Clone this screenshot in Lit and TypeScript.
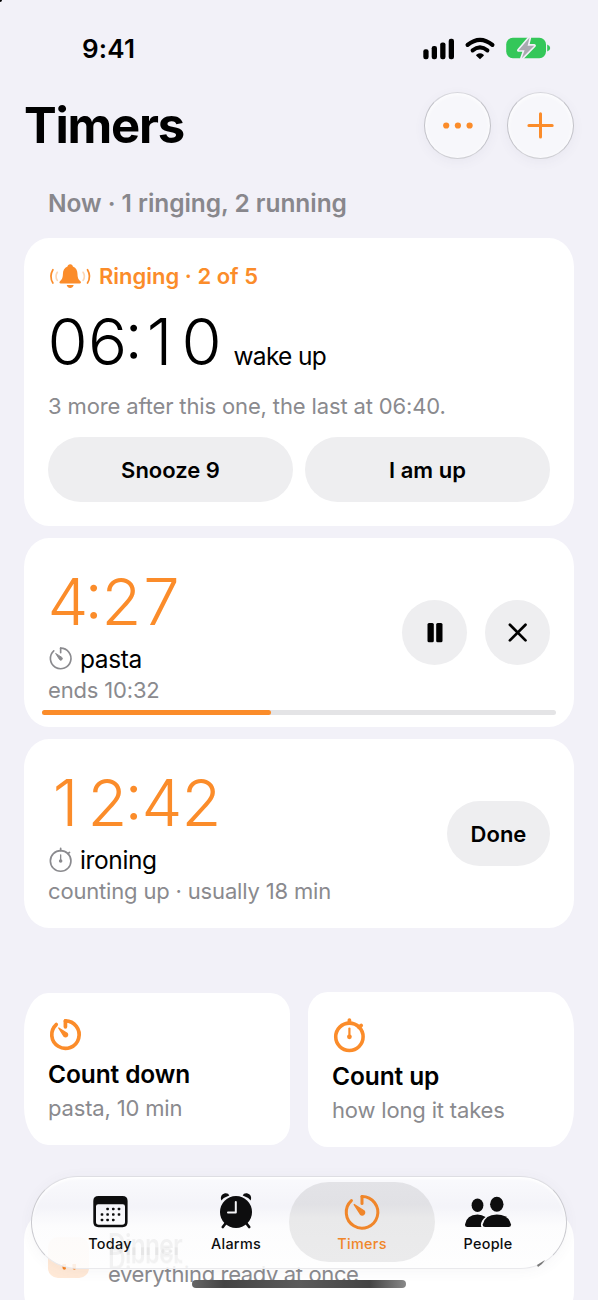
import { LitElement, html, css, svg } from "lit";
import { customElement } from "lit/decorators.js";

const countdown = (w: number) => svg`
  <path d="M0 -10 A10 10 0 1 1 -6.7 -7.4" fill="none" stroke="currentColor" stroke-width=${w} stroke-linecap="round"/>
  <path d="M0 -10 V${-5.4 - w / 8}" stroke="currentColor" stroke-width=${w} stroke-linecap="round"/>
  <path d="M-4.9 -4.9 L1.2 -1 A1.5 1.5 0 0 1 -1 1.2 Z" fill="currentColor" stroke="currentColor" stroke-width=".9" stroke-linejoin="round"/>`;

const stopwatch = (w: number) => svg`
  <circle r="10" fill="none" stroke="currentColor" stroke-width=${w}/>
  <path d="M0 -10 V-12.2 M7 -7 L8.6 -8.3" stroke="currentColor" stroke-width=${w * 1.05} stroke-linecap="round"/>
  <path d="M0 -6 V0" stroke="currentColor" stroke-width=${Math.max(1.3, w * 0.62)} stroke-linecap="round"/>
  <circle r="1.75" fill="currentColor"/>`;

// Evenly spaced digits around a narrow, raised colon.
const digits = (t: string) =>
  [...t].map(c => html`<i class=${c === ":" ? "colon" : c === "1" ? "one" : ""}>${c}</i>`);

@customElement("app-root")
export class AppRoot extends LitElement {
  static styles = css`
    :host { display: block; width: 598px; height: 1300px; overflow: hidden; position: relative;
      background: #f2f1f8; color: #000; font-family: Inter, "Liberation Sans", sans-serif; }
    * { box-sizing: border-box; }
    svg { display: block; overflow: visible; }
    .speck { position: absolute; left: 0; top: 0; width: 2px; height: 2px; background: #000; border-bottom-right-radius: 2px; }
    .status { height: 92px; display: flex; justify-content: space-between; padding: 34px 47px 0 82px; }
    .clock { font-size: 26px; font-weight: 600; line-height: 30px; letter-spacing: 0.2px; }
    .header { display: flex; height: 67px; padding: 0 24px 0 24px; align-items: center; }
    h1 { margin: 0; flex: 1; font-size: 49px; line-height: 66px; font-weight: 700; letter-spacing: -1.2px; }
    .round { width: 67px; height: 67px; border-radius: 50%; margin-left: 16px; border: 1px solid #c2c2c8;
      border-top-color: #d6d6dc; border-bottom-color: #cfcfd4;
      background: #f7f7fb; box-shadow: inset 0 1px 5px #fff, 0 3px 12px rgba(90,90,120,.06); color: #fb8c2a; }
    .section { margin: 29px 0 0 48px; height: 50px; line-height: 30px; font-size: 24.5px; font-weight: 600; color: #88878c; letter-spacing: -0.05px; white-space: nowrap; }
    .stack { display: flex; flex-direction: column; gap: 12px; padding: 0 24px; }
    .card { background: #fff; border-radius: 25px / 29px; }
    .alarm { height: 288px; padding: 24px 24px 0; }
    .ring { display: flex; align-items: center; height: 28px; color: #fb8c2a; font-size: 22px; font-weight: 600; gap: 7px; white-space: nowrap; }
    .time { display: flex; font-size: 65px; line-height: 78px; font-weight: 300; white-space: nowrap; }
    .time i { font-style: normal; width: 40px; text-align: center; margin-left: -.5px; margin-right: .5px; }
    .time .colon { width: 14px; text-indent: -3px; font-feature-settings: "case"; }
    .time .one { text-indent: -4px; }
    .orange { color: #fb8c2a; }
    .line { display: flex; align-items: baseline; height: 77px; margin-top: 13px; }
    .name { font-size: 24.5px; line-height: 30px; letter-spacing: -0.38px; white-space: nowrap; }
    .wake { margin-left: 11.5px; letter-spacing: -0.7px; }
    .grey { font-size: 22px; line-height: 28px; color: #8a8a8e; white-space: nowrap; letter-spacing: -0.17px; }
    .g1 { margin-top: 12px; letter-spacing: -0.14px; }
    .buttons { display: flex; gap: 12px; margin-top: 17px; }
    .pill { flex: 1; height: 65px; border-radius: 33px; background: #eeeef0; font-size: 22px; font-weight: 600;
      display: flex; align-items: center; justify-content: center; }
    .timer { height: 189px; display: flex; flex-direction: column; }
    .body { display: flex; padding: 25px 24px 0; height: 172px; flex: none; }
    .info { flex: 1; }
    .label { display: flex; gap: 7px; height: 30px; align-items: center; margin: 2.5px 0 2px; }
    .label svg { color: #8a8a8e; }
    .acts { display: flex; gap: 18px; margin-top: 37px; }
    .act { width: 65px; height: 65px; flex: none; border-radius: 50%; background: #eeeef0; }
    .done { width: 103px; flex: none; }
    .track { margin: 0 18px; height: 5px; border-radius: 3px; background: #e4e4e6; flex: none; }
    .fill { height: 5px; border-radius: 3px; background: #fb8c2a; }
    .tiles { display: flex; gap: 18px; padding: 63.6px 24px 0; align-items: center; }
    .tile { width: 266px; height: 152.5px; padding: 24px 24px 0; }
    .tile.l { border-radius: 24px 20px 20px 24px / 38px 21px 21px 38px; }
    .tile.r { height: 155px; border-radius: 20px 24px 24px 20px / 21px 38px 38px 21px; }
    .tile svg { color: #fb8c2a; }
    .tile b { display: block; margin-top: 6px; font-size: 24.5px; line-height: 30px; font-weight: 600; letter-spacing: -0.1px; }
    .tile.r b { margin-top: 9px; }
    .tile .grey { margin-top: 5.4px; }
    .next { margin: 64.4px 24px 0; height: 110px; display: flex; padding: 26px 24px; gap: 19px; }
    .badge { width: 41px; height: 41px; border-radius: 10px; background: #ffe9d7; flex: none; }
    .next .grey { margin-top: 23px; letter-spacing: -0.37px; }
    .tabs { position: absolute; left: 31px; top: 1176px; width: 536px; height: 93px; border-radius: 47px; overflow: hidden;
      border: 1px solid #c9c9ce; border-top-color: #dedee3; border-bottom-color: #e9e9ec;
      background: linear-gradient(rgba(250,250,253,.96), rgba(244,244,249,.94) 32%, rgba(252,252,253,.92) 55%, rgba(254,254,254,.88));
      box-shadow: inset 0 2px 3px #fff, 0 2px 14px rgba(80,80,100,.05); display: flex; padding: 5px 15px; }
    .tab { width: 126px; height: 80px; border-radius: 40px; padding-top: 12px; display: flex; flex-direction: column; flex: none;
      align-items: center; font-size: 14.4px; line-height: 18px; font-weight: 550; color: #0d0d0e; letter-spacing: .3px; }
    .tab svg { margin-bottom: 5px; fill: currentColor; }
    .tab.on { width: 146px; margin: 0 -10px; background: linear-gradient(#e3e3e7, #e1e1e5 28%, #e9e9ea 45%, #ebebec); color: #f0862a; }
    .ghost { position: absolute; left: 76px; top: 55px; height: 17px; font-size: 24.5px; line-height: 20px; font-weight: 600;
      letter-spacing: -.7px; color: rgba(80,80,80,.07); transform: scaleY(1.2); transform-origin: top; -webkit-box-reflect: below -2px; }
    .home { position: absolute; left: 192px; top: 1280px; width: 214px; height: 8px; border-radius: 4px;
      background: linear-gradient(90deg, #666, #444 15%, #5b5b5b 50%, #444 83%, #888); }
    .glint { position: absolute; left: 537px; top: 1260px; }
  `;

  render() {
    return html`
      <div class="speck"></div>
      <div class="status">
        <div class="clock">9:41</div>
        <svg width="128" height="26" viewBox="423 34 128 26">
          <rect x="423.3" y="49.3" width="5.3" height="9.9" rx="2.2"/><rect x="431.7" y="46" width="5.3" height="13.2" rx="2.2"/>
          <rect x="440.2" y="42.4" width="5.3" height="16.8" rx="2.2"/><rect x="448.7" y="38.7" width="5.3" height="20.5" rx="2.2"/>
          <g fill="none" stroke="#000" stroke-linecap="round">
            <path d="M467.6 44.9 Q480 34.7 492.4 44.9" stroke-width="4.2"/>
            <path d="M472.6 50.4 Q480 44.4 487.4 50.4" stroke-width="4"/>
          </g>
          <path d="M480 59.3 L476.3 55.7 Q475.8 55 476.6 54.4 Q480 52 483.4 54.4 Q484.2 55 483.7 55.7 Z"/>
          <rect x="506.2" y="37.8" width="39.8" height="20.4" rx="6.6" fill="#34c759"/>
          <path d="M547.2 44.4 Q550.2 45.5 550.2 48 Q550.2 50.5 547.2 51.6 Z" fill="#34c759"/>
          <path d="M529.6 37.6 L518.6 50.2 H524.6 L521.6 58.5 L534.3 45.7 H527.6 Z" fill="#a9a9b0" stroke="#f2f1f8" stroke-width="3.2" paint-order="stroke" stroke-linejoin="round"/>
        </svg>
      </div>
      <div class="header">
        <h1>Timers</h1>
        <div class="round"><svg width="65" height="65" viewBox="425 93 65 65" fill="currentColor"><circle cx="446.2" cy="125.5" r="3.1"/><circle cx="457.9" cy="125.5" r="3.1"/><circle cx="469.6" cy="125.5" r="3.1"/></svg></div>
        <div class="round"><svg width="65" height="65" viewBox="508.500 93 65 65"><path d="M541 113.700 V137 M529.400 125.400 H552.700" stroke="currentColor" stroke-width="3" stroke-linecap="round"/></svg></div>
      </div>
      <div class="section">Now · 1 ringing, 2 running</div>
      <div class="stack">
        <div class="card alarm">
          <div class="ring">
            <svg width="44" height="28" viewBox="48 262 44 28">
              <path d="M70.200 264.300 C71.900 264.300 72.700 265.300 72.900 266.600 C76.300 268 77.400 270.600 77.500 273.900 C77.600 278 78.500 279.300 80.300 281 C81.500 282.200 81 283.400 79.700 283.400 H60.700 C59.400 283.400 58.900 282.200 60.100 281 C61.900 279.300 62.800 278 62.900 273.900 C63 270.600 64.100 268 67.500 266.600 C67.700 265.300 68.500 264.300 70.200 264.300 Z M66.700 285 H73.700 C73.200 287 71.900 287.900 70.200 287.900 C68.500 287.900 67.200 287 66.700 285 Z" fill="currentColor"/>
              <g fill="none" stroke="currentColor" stroke-width="1.700" stroke-linecap="round"><path d="M52.900 269.700 Q48.900 276.400 52.900 283"/><path d="M87.500 269.700 Q91.500 276.400 87.500 283"/>
              <g opacity=".35"><path d="M57.300 272.300 Q54.700 276.400 57.300 280.400"/><path d="M83.100 272.300 Q85.700 276.400 83.100 280.400"/></g></g>
            </svg>
            <span>Ringing · 2 of 5</span>
          </div>
          <div class="line"><span class="time">${digits("06:10")}</span><span class="name wake">wake up</span></div>
          <div class="grey g1">3 more after this one, the last at 06:40.</div>
          <div class="buttons"><div class="pill">Snooze 9</div><div class="pill">I am up</div></div>
        </div>
        <div class="card timer">
          <div class="body">
            <div class="info">
              <div class="time orange">${digits("4:27")}</div>
              <div class="label"><svg width="25" height="30" viewBox="-12.300 -14 24.300 29.100">${countdown(1.6)}</svg><span class="name">pasta</span></div>
              <div class="grey">ends 10:32</div>
            </div>
            <div class="acts">
              <div class="act"><svg width="65" height="65" viewBox="401.500 600 65 65"><rect x="427" y="623" width="6.300" height="19.300" rx="1.500"/><rect x="435.700" y="623" width="6.300" height="19.300" rx="1.500"/></svg></div>
              <div class="act"><svg width="65" height="65" viewBox="484.800 600 65 65"><path d="M509.700 624.800 L525.300 640.400 M525.300 624.800 L509.700 640.400" stroke="#000" stroke-width="2.700" stroke-linecap="round"/></svg></div>
            </div>
          </div>
          <div class="track"><div class="fill" style="width:${(229 / 514) * 100}%"></div></div>
        </div>
        <div class="card timer">
          <div class="body">
            <div class="info">
              <div class="time orange">${digits("12:42")}</div>
              <div class="label"><svg width="25" height="30" viewBox="-12.300 -15.500 24.300 29.100">${stopwatch(1.6)}</svg><span class="name">ironing</span></div>
              <div class="grey">counting up · usually 18 min</div>
            </div>
            <div class="acts"><div class="pill done">Done</div></div>
          </div>
        </div>
      </div>
      <div class="tiles">
        <div class="card tile l"><svg width="34" height="36" viewBox="-12.700 -12.900 24.800 26.300">${countdown(2.7)}</svg><b>Count down</b><div class="grey">pasta, 10 min</div></div>
        <div class="card tile r"><svg width="34" height="36" viewBox="-12.700 -15.200 24.800 26.300">${stopwatch(2.6)}</svg><b>Count up</b><div class="grey">how long it takes</div></div>
      </div>
      <div class="card next">
        <div class="badge"><svg width="41" height="41" viewBox="48 1237 41 41" fill="#f58220"><path d="M62.500 1264 H66 V1268 Q66 1269.800 64.400 1269.800 Q62.800 1269.800 62.500 1268 Z M72.500 1264 H76 V1268 Q76 1269.800 74.400 1269.800 Q72.800 1269.800 72.500 1268 Z"/></svg></div>
        <div class="grey">everything ready at once</div>
      </div>
      <div class="tabs">
        <div class="ghost">Dinner</div>
        <div class="tab"><svg width="48" height="36" viewBox="86 1194 48 36">
          <path fill-rule="evenodd" d="M98.500 1196 H122.500 Q127.600 1196 127.600 1201 V1222 Q127.600 1227.200 122.500 1227.200 H98.500 Q93.300 1227.200 93.300 1222 V1201 Q93.300 1196 98.500 1196 Z M98.200 1204.200 Q96 1204.200 96 1206.400 V1222 Q96 1224.800 98.800 1224.800 H122.200 Q125 1224.800 125 1222 V1206.400 Q125 1204.200 122.800 1204.200 Z"/>
          ${[[107.6,1209],[113.3,1209],[119,1209],[102,1214.5],[107.6,1214.5],[113.300,1214.5],[119,1214.5],[102,1220],[107.6,1220],[113.300,1220]].map(p => svg`<rect x=${p[0] - 1.3} y=${p[1] - 1.3} width="2.600" height="2.600" rx=".8"/>`)}
          </svg>Today</div>
        <div class="tab"><svg width="48" height="36" viewBox="212 1194 48 36">
          <circle cx="236" cy="1212" r="16"/>
          <path d="M221.300 1200.500 Q219.500 1194.500 225 1193.200 Q228.500 1192.800 229.300 1195.500 Q224.500 1197 221.300 1200.500 Z M250.700 1200.500 Q252.500 1194.500 247 1193.200 Q243.500 1192.800 242.700 1195.500 Q247.500 1197 250.700 1200.500 Z"/>
          <path d="M225.500 1223.500 L222.800 1227 M246.500 1223.500 L249.200 1227" stroke="#0d0d0e" stroke-width="2.700" stroke-linecap="round"/>
          <path d="M235.800 1202 V1212.500 H228" fill="none" stroke="#f4f4f6" stroke-width="2" stroke-linecap="round" stroke-linejoin="round"/>
          </svg>Alarms</div>
        <div class="tab on"><svg width="48" height="36" viewBox="-15.200 -11.600 30.400 22.800">${countdown(1.9)}</svg>Timers</div>
        <div class="tab"><svg width="48" height="36" viewBox="464 1194 48 36">
          <ellipse cx="477.500" cy="1205.300" rx="5.900" ry="6.700"/><ellipse cx="496.800" cy="1204.200" rx="6.700" ry="7.500"/>
          <path d="M467.500 1227 Q465 1227 465 1224.500 Q466.500 1214.800 477.500 1214.500 Q482 1214.600 485.600 1217 Q481 1220.500 480.900 1225 Q480.900 1226.200 481.500 1227 Z"/>
          <path d="M485.300 1227 Q482.700 1227 482.700 1224.500 Q485 1214.500 496.800 1214.500 Q508.500 1214.500 511 1224.500 Q511 1227 508.400 1227 Z"/>
          </svg>People</div>
      </div>
      <svg class="glint" width="10" height="8" viewBox="0 0 10 8"><path d="M0 5 L8 0 Q5 5 1 7 Z" fill="#777"/></svg>
      <div class="home"></div>
    `;
  }
}
